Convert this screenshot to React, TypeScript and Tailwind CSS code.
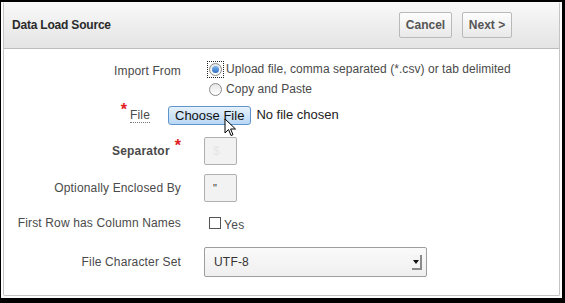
import React from "react";

const font = { fontFamily: '"Liberation Sans", Arial, sans-serif' };

function Label({ children, bold }: { children: React.ReactNode; bold?: boolean }) {
  return (
    <div
      className={`w-[177px] shrink-0 text-right text-[12px] tracking-[0.15px] text-[#4a4a4a] ${bold ? "font-bold" : ""}`}
    >
      {children}
    </div>
  );
}

function Radio({ checked }: { checked?: boolean }) {
  return (
    <span className="relative inline-flex h-[13px] w-[13px] shrink-0 items-center justify-center rounded-full border border-[#8a8a8a] bg-gradient-to-b from-[#e6e6e6] to-white">
      {checked && <span className="h-[7px] w-[7px] rounded-full bg-gradient-to-b from-[#7fb4ec] to-[#2f6fc4]" />}
    </span>
  );
}

export default function App() {
  return (
    <div className="h-[303px] w-[565px] bg-black pl-[1px] pr-[3px] pt-[2px] pb-[5px]" style={font}>
      <div className="h-full w-full bg-white p-[2px] pt-0">
        <div className="relative h-full w-full rounded-[2px] border border-[#c4c4c4] border-t-0 bg-white">
          {/* Header */}
          <div className="flex h-[47px] items-center justify-between border-b border-[#bdbdbd] bg-gradient-to-b from-[#f9f9f9] to-[#e4e4e4] pl-[8px] pr-[47px]">
            <div className="text-[12px] font-bold tracking-[-0.2px] text-[#2a2a2a]">Data Load Source</div>
            <div className="flex gap-[10px]">
              <button className="h-[26px] w-[53px] rounded-[2px] border border-[#b9b9b9] bg-gradient-to-b from-[#fdfdfd] to-[#e9e9e9] text-[12px] font-bold text-[#555]">
                Cancel
              </button>
              <button className="h-[26px] w-[50px] rounded-[2px] border border-[#b9b9b9] bg-gradient-to-b from-[#fdfdfd] to-[#e9e9e9] text-[12px] font-bold text-[#555]">
                Next &gt;
              </button>
            </div>
          </div>

          {/* Form */}
          <div className="flex flex-col">
            {/* Import From */}
            <div className="mt-[11px] flex items-start">
              <div className="w-[177px] shrink-0 pt-[2px] text-right text-[12px] tracking-[0.15px] text-[#4a4a4a]">
                Import From
              </div>
              <div className="ml-[26px] flex flex-col text-[12px] tracking-[0.05px] text-[#4a4a4a]">
                <div className="flex items-center">
                  <span className="flex h-[17px] w-[17px] items-center justify-center border border-dotted border-[#222]">
                    <Radio checked />
                  </span>
                  <span className="ml-[2px]">Upload file, comma separated (*.csv) or tab delimited</span>
                </div>
                <div className="mt-[2px] flex items-center pl-[2px]">
                  <Radio />
                  <span className="ml-[4px]">Copy and Paste</span>
                </div>
              </div>
            </div>

            {/* File */}
            <div className="mt-[7px] flex h-[20px] items-center">
              <div className="flex w-[146px] shrink-0 justify-end text-[12px] tracking-[0.15px] text-[#4a4a4a]">
                <span className="mr-[3px] -mt-[6px] text-[16px] font-bold leading-none text-[#e0201c]">*</span>
                <span className="border-b border-dotted border-[#777] leading-[14px]">File</span>
              </div>
              <button className="ml-[18px] h-[19px] rounded-[3px] border border-[#5e95cf] bg-gradient-to-b from-[#e6f1fb] to-[#b9d8f3] px-[6px] text-[13px] leading-none text-[#111]">
                Choose File
              </button>
              <span className="ml-[5px] text-[13px] text-[#222]">No file chosen</span>
            </div>

            {/* Separator */}
            <div className="mt-[12px] flex items-center">
              <div className="flex w-[177px] shrink-0 justify-end">
                <span className="text-[12px] font-bold tracking-[0.2px] text-[#4a4a4a]">Separator</span>
                <span className="ml-[5px] -mt-[4px] text-[16px] font-bold leading-none text-[#e0201c]">*</span>
              </div>
              <div className="ml-[23px] flex h-[28px] w-[33px] items-center rounded-[2px] border border-[#b0b0b0] bg-[#f2f2f2] pl-[8px] text-[12px] text-[#e6e6e6]">
                $
              </div>
            </div>

            {/* Optionally */}
            <div className="mt-[9px] flex items-center">
              <Label>Optionally Enclosed By</Label>
              <div className="ml-[23px] flex h-[28px] w-[33px] items-center rounded-[2px] border border-[#b0b0b0] bg-[#f2f2f2] pl-[8px] text-[11px] text-[#333]">
                "
              </div>
            </div>

            {/* First Row */}
            <div className="mt-[12px] flex h-[18px] items-center">
              <Label>First Row has Column Names</Label>
              <span className="ml-[28px] h-[12px] w-[12px] border border-[#555] bg-white" />
              <span className="ml-[3px] mt-[3px] text-[12px] tracking-[0.3px] text-[#4a4a4a]">Yes</span>
            </div>

            {/* Char set */}
            <div className="mt-[15px] flex items-center">
              <Label>File Character Set</Label>
              <div className="relative ml-[23px] flex h-[30px] w-[223px] items-center rounded-[2px] border border-[#9e9e9e] bg-gradient-to-b from-[#fafafa] to-[#efefef] pl-[9px] text-[12px] tracking-[0.2px] text-[#333]">
                UTF-8
                <div className="absolute right-[4px] top-[7px] flex h-[15px] w-[10px] items-center justify-center border-b-2 border-r-2 border-[#8a8a8a] bg-[#f4f4f4]">
                  <svg width="6" height="4" viewBox="0 0 6 4">
                    <path d="M0 0H6L3 4Z" fill="#111" />
                  </svg>
                </div>
              </div>
            </div>
          </div>

          {/* mouse cursor */}
          <svg className="absolute left-[220px] top-[116px]" width="14" height="20" viewBox="0 0 14 20">
            <path d="M1 1 L1 15 L4.5 11.5 L7 17.5 L9 16.7 L6.6 11 L11.5 11 Z" fill="white" stroke="black" strokeWidth="1" strokeLinejoin="round" />
          </svg>
        </div>
      </div>
    </div>
  );
}
